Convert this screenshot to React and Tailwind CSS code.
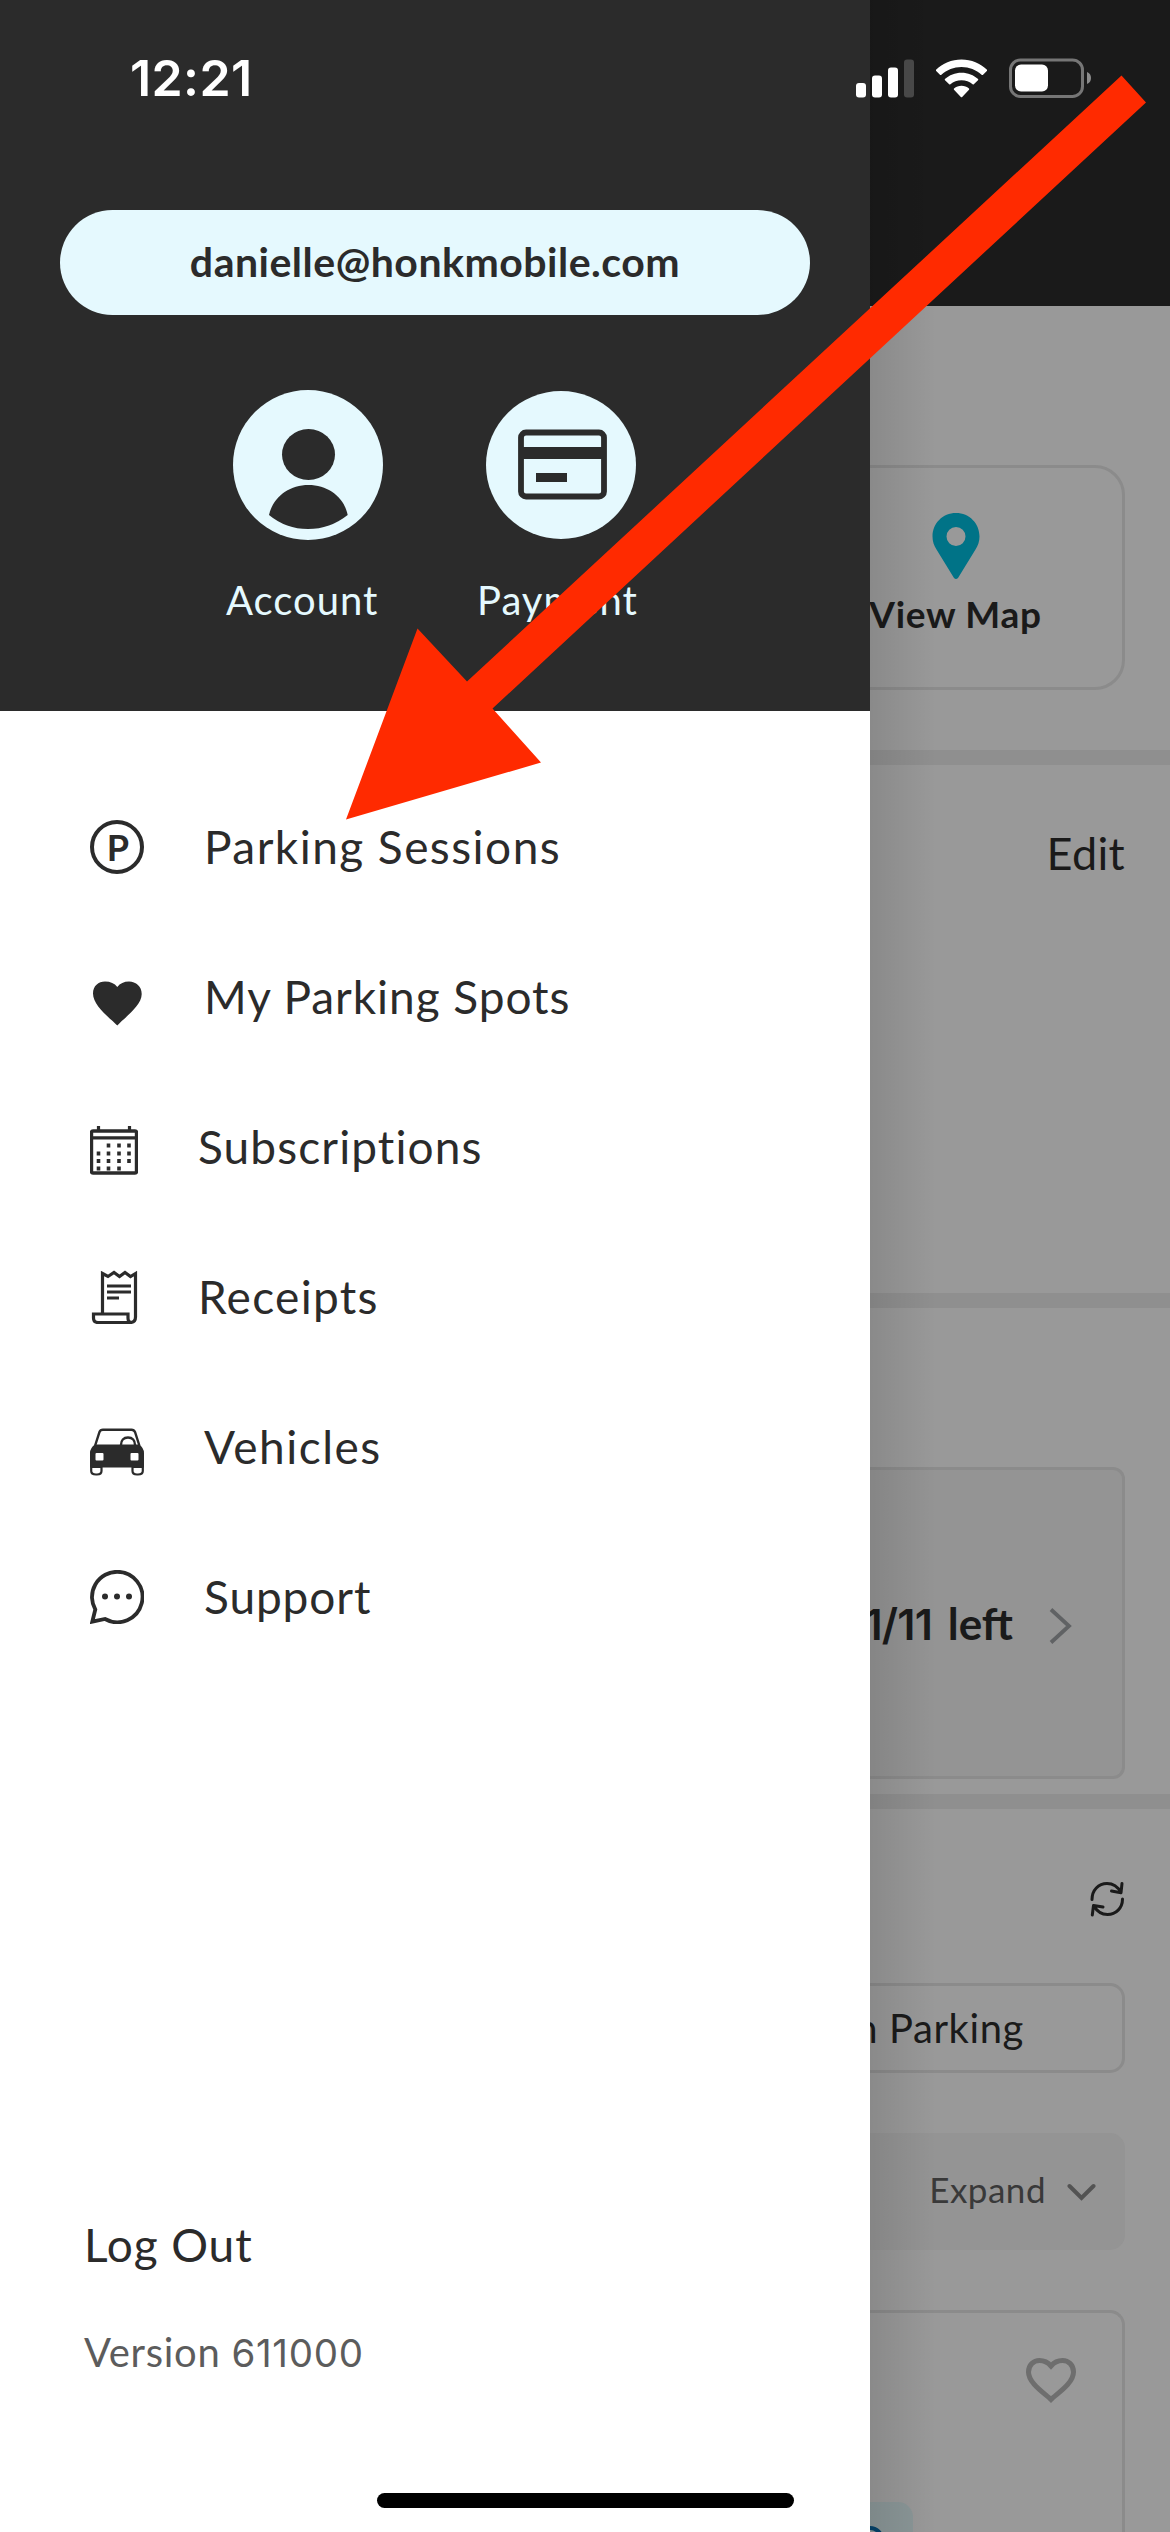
const INK = '#2b2b2b';

function SignalIcon() {
  return (
    <svg className="h-[41px] w-[58px]" viewBox="0 0 58 41" fill="#fff">
      <rect x="0" y="25" width="10" height="14.5" rx="3" />
      <rect x="16" y="17.5" width="10" height="22" rx="3" />
      <rect x="32" y="9.5" width="10" height="30" rx="3" />
      <rect x="48" y="1.5" width="10" height="38" rx="3" fill="#484848" />
    </svg>
  );
}

function WifiIcon() {
  return (
    <svg className="h-[41px] w-[51px]" viewBox="0 0 51 41" fill="#fff">
      <path d="M25.5 1.5C35.400 1.500 44.400 5.400 51 11.800Q51.300 12.400 50.800 13L46.800 16.900Q46.200 17.300 45.600 16.800C40.300 11.900 33.200 9 25.500 9S10.700 11.900 5.400 16.800Q4.800 17.300 4.200 16.900L.2 13Q-.3 12.400 0 11.800C6.600 5.400 15.600 1.500 25.500 1.500Z" />
      <path d="M25.500 14.700C31.900 14.700 37.700 17.100 42.100 21Q42.500 21.600 42 22.200L37.800 26.300Q37.200 26.700 36.600 26.200C33.600 23.700 29.700 22.300 25.500 22.300S17.400 23.700 14.400 26.200Q13.800 26.700 13.200 26.300L9 22.200Q8.500 21.600 8.900 21C13.300 17.100 19.100 14.700 25.500 14.700Z" />
      <path d="M25.500 27.800C28.300 27.800 30.900 28.800 33 30.500Q33.500 31.100 33 31.700L26.200 39Q25.500 39.700 24.800 39L18 31.700Q17.500 31.100 18 30.500C20.100 28.800 22.700 27.800 25.500 27.800Z" />
    </svg>
  );
}

function BatteryIcon() {
  return (
    <svg className="h-[41px] w-[83px]" viewBox="0 0 83 41">
      <rect x="1.500" y="1.900" width="72" height="36.500" rx="10" fill="none" stroke="#767676" strokeWidth="3" />
      <rect x="6" y="6.500" width="33" height="27" rx="6" fill="#fff" />
      <path d="M78 14Q82 15.500 82 20T78 26Z" fill="#8c8c8c" />
    </svg>
  );
}

function StatusBar() {
  return (
    <div className="absolute inset-x-0 top-0 z-10 flex h-[156px] items-center justify-between pr-[78px] pl-[130px] text-white">
      <span className="font-['Inter'] text-[50px] leading-none font-semibold tracking-[0.4px]">12:21</span>
      <div className="flex items-center gap-[22px]">
        <SignalIcon />
        <WifiIcon />
        <BatteryIcon />
      </div>
    </div>
  );
}

function AccountIcon() {
  return (
    <svg className="h-[150px] w-[150px]" viewBox="0 0 150 150">
      <circle cx="75" cy="75" r="75" fill="#e5f9fe" />
      <ellipse cx="75.500" cy="64.500" rx="26.500" ry="25.500" fill={INK} />
      <path d="M36 125C40 107 56 95 75.500 95S111 107 114.700 125Q97 139 75 139T36 125Z" fill={INK} />
    </svg>
  );
}

function PaymentIcon() {
  return (
    <svg className="h-[150px] w-[150px]" viewBox="0 0 150 150">
      <ellipse cx="75" cy="75" rx="75" ry="74" fill="#e5f9fe" />
      <rect x="35" y="42.500" width="83" height="64" rx="5" fill="none" stroke={INK} strokeWidth="5.800" />
      <rect x="35" y="57" width="83" height="12" fill={INK} />
      <rect x="50" y="83" width="31" height="9" fill={INK} />
    </svg>
  );
}

function ParkingIcon() {
  return (
    <span className="flex h-[54px] w-[54px] items-center justify-center rounded-full border-[4px] border-[#2b2b2b] pl-0.5 font-['Lato'] text-[36px] leading-none font-bold">
      P
    </span>
  );
}

function HeartIcon() {
  return (
    <svg className="h-[54px] w-[54px]" viewBox="0 0 54 54" fill={INK} overflow="visible">
      <path d="M27.300 55.500C20 48 3 36 3 23.500C3 16 8.500 11.600 15 11.600C20.500 11.600 24.500 13.500 27.300 17C30 13.500 34 11.600 39 11.600C46 11.600 51.700 16.500 51.700 24C51.700 36 34 48 27.300 55.500Z" />
    </svg>
  );
}

function CalendarIcon() {
  const dots = [
    [18.500, 19], [29, 19], [39, 19],
    [8.500, 27], [18.500, 27], [29, 27], [39, 27],
    [8.500, 34.500], [18.500, 34.500], [29, 34.500], [39, 34.500],
    [8.500, 42], [18.500, 42], [29, 42],
  ];
  return (
    <svg className="mt-[6px] h-[50px] w-[48px]" viewBox="0 0 48 50">
      <rect x="1.500" y="6" width="45" height="42" rx="1.500" fill="none" stroke={INK} strokeWidth="3.400" />
      <path d="M1 12.800H47M8.500 1V6M39.500 1V6" stroke={INK} strokeWidth="3.200" />
      {dots.map(([x, y]) => (
        <rect key={`${x}-${y}`} x={x - 1.8} y={y - 0.5} width="3.600" height="4" fill={INK} />
      ))}
    </svg>
  );
}

function ReceiptIcon() {
  return (
    <svg className="h-[54px] w-[48px]" viewBox="0 0 48 54" fill="none" stroke={INK} strokeWidth="3.200">
      <path d="M12.500 44V3.500L18 6.500L24 2.500L29.500 6.500L35 2.500L40.500 6.500L45.500 3.500V47Q45.500 52.500 40 52.500H8Q3.500 52.500 3.500 48V44H38V48Q38 52.500 41.500 52.500" />
      <path d="M17 16H41M17 22H41M17 28H29" />
    </svg>
  );
}

function CarIcon() {
  return (
    <svg className="mt-[4px] h-[54px] w-[54px]" viewBox="0 0 54 54">
      <path d="M5 24L9.500 10Q10.300 7.700 13 7.700H41.500Q44 7.700 45 10L49.500 24" fill="none" stroke={INK} strokeWidth="2.400" />
      <path d="M31 23C31 18.500 33.500 15.500 38 15.500S45 18.500 45 23" fill="none" stroke={INK} strokeWidth="2.400" />
      <path d="M5 22.500H49Q54 26 54 31V45H0V31Q0 26 5 22.500ZM6.500 31Q5.500 31 5.500 32V37.500Q5.500 38.500 6.500 38.500H12.500Q13.500 38.500 13.500 37.500V32Q13.500 31 12.500 31ZM41.500 31Q40.500 31 40.500 32V37.500Q40.500 38.500 41.500 38.500H47.500Q48.500 38.500 48.500 37.500V32Q48.500 31 47.500 31Z" fill={INK} fillRule="evenodd" />
      <path d="M1.200 45V49Q1.200 52.500 6 52.500H7Q11.500 52.500 11.500 49V45ZM42.500 45V49Q42.500 52.500 47 52.500H48Q52.800 52.500 52.800 49V45Z" fill="#fff" stroke={INK} strokeWidth="2.200" />
      <rect x="0" y="42" width="54" height="3.500" fill={INK} />
    </svg>
  );
}

function ChatIcon() {
  return (
    <svg className="h-[54px] w-[54px]" viewBox="0 0 54 54">
      <path d="M27 1.800A25.200 25.200 0 1 1 15 49L2.300 51.700L5.300 39.500A25.200 25.200 0 0 1 27 1.800Z" fill="none" stroke={INK} strokeWidth="3.800" />
      <circle cx="15" cy="26.500" r="3" fill={INK} />
      <circle cx="27" cy="26.500" r="3" fill={INK} />
      <circle cx="39" cy="26.500" r="3" fill={INK} />
    </svg>
  );
}

const MENU = [
  { label: 'Parking Sessions', icon: ParkingIcon, spacing: 'tracking-[1.45px]' },
  { label: 'My Parking Spots', icon: HeartIcon, spacing: 'tracking-[0.95px]' },
  { label: 'Subscriptions', icon: CalendarIcon, spacing: 'tracking-[1.1px]' },
  { label: 'Receipts', icon: ReceiptIcon, spacing: 'tracking-[1.3px]' },
  { label: 'Vehicles', icon: CarIcon, spacing: 'tracking-[1.5px]' },
  { label: 'Support', icon: ChatIcon, spacing: 'tracking-[0.9px]' },
];

function Drawer() {
  return (
    <aside className="flex h-full w-[870px] shrink-0 flex-col bg-white text-[#2b2b2b]">
      <header className="flex h-[711px] flex-col items-center bg-[#2b2b2b] pt-[210px]">
        <div className="flex h-[105px] w-[750px] items-center justify-center rounded-full bg-[#e5f9fe] text-[41px] leading-none font-bold">
          <span className="mb-[2px] tracking-[0.5px]">danielle@honkmobile.com</span>
        </div>
        <div className="mt-[75px] flex w-full pl-[226px] text-[40px] leading-[48px] text-[#e5f9fe]">
          <div className="flex w-[253px] flex-col pl-[7px]">
            <AccountIcon />
            <span className="mt-[36px] -ml-[7px] tracking-[1px]">Account</span>
          </div>
          <div className="flex flex-col pl-[7px]">
            <PaymentIcon />
            <span className="mt-[36px] -ml-[9px] tracking-[1px]">Payment</span>
          </div>
        </div>
      </header>
      <nav className="flex flex-col pt-[61px] pl-[90px]">
        {MENU.map(({ label, icon: Icon, spacing }) => (
          <div key={label} className="flex h-[150px] items-center gap-[60px] text-[46px] leading-none">
            <Icon />
            <span className={spacing}>{label}</span>
          </div>
        ))}
      </nav>
      <footer className="mt-auto flex h-[314px] flex-col pl-[84px]">
        <span className="text-[46px] leading-[54px] tracking-[0.9px]">Log Out</span>
        <span className="mt-[56px] text-[40px] leading-[48px] tracking-[0.7px] text-[#5c5c5c]">
          Version <span className="font-['Inter'] text-[38.5px]">611000</span>
        </span>
      </footer>
    </aside>
  );
}

function RefreshIcon() {
  return (
    <svg className="h-[36px] w-[34px]" viewBox="0 0 34 36" fill="none" stroke="#1a1a1a" strokeWidth="3" strokeLinecap="round" strokeLinejoin="round">
      <path d="M2 18.500C2 9 8.500 2.500 17 2.500C23 2.500 28 6 31 11.500M21.500 10L31 11.800L32 2.500" />
      <path d="M32.500 18C32.500 27 26 33.500 17.500 33.500C11.500 33.500 7 30.500 3.500 24.500M13 26L3.500 24.500L2.300 34" />
    </svg>
  );
}

function Content() {
  return (
    <main className="flex h-full w-[300px] flex-col overflow-hidden bg-[#999] text-[#1a1a1a]">
      <div className="h-[306px] shrink-0 bg-[#1a1a1a]" />

      <section className="flex h-[444px] shrink-0 pt-[159px]">
        <div className="-ml-[84px] flex h-[225px] w-[339px] shrink-0 flex-col items-center rounded-[30px] border-[3px] border-[#8b8b8b] pt-[45px]">
          <svg className="h-[66px] w-[48px]" viewBox="0 0 48 66">
            <path d="M24 0C37.500 0 47.500 10.500 47.500 23.500C47.500 28.500 46 32.500 43.500 36.500L26 65Q24 67 22 65L4.500 36.500C2 32.500.5 28.500.5 23.500C.5 10.500 10.500 0 24 0ZM24 14A9.500 9.500 0 1 0 24 33A9.500 9.500 0 1 0 24 14Z" fill="#007387" fillRule="evenodd" />
          </svg>
          <span className="mt-[11px] text-[37px] leading-[48px] font-bold tracking-[0.7px] whitespace-nowrap">View Map</span>
        </div>
      </section>
      <div className="h-[15px] shrink-0 bg-[#8f8f8f]" />

      <section className="flex h-[528px] shrink-0 justify-end pt-[61px] pr-[45px]">
        <span className="text-[45px] leading-[54px] tracking-[0.3px]">Edit</span>
      </section>
      <div className="h-[15px] shrink-0 bg-[#8f8f8f]" />

      <section className="h-[486px] shrink-0 pt-[159px]">
        <div className="flex h-[312px] w-[255px] items-center justify-end rounded-r-[12px] border-[3px] border-l-0 border-[#8b8b8b] bg-[#949494] pr-[50px]">
          <span className="text-[44px] leading-none font-bold whitespace-nowrap">
            <span className="mr-[5px] font-['Inter'] text-[43px] font-semibold tracking-[-0.8px]">1/11</span> left
          </span>
          <svg className="mt-[6px] ml-[36px] h-[38px] w-[23px] shrink-0" viewBox="0 0 23 38" fill="none" stroke="#606264" strokeWidth="3.800">
            <path d="M2 2.500L20 19L2 35.500" />
          </svg>
        </div>
      </section>
      <div className="h-[15px] shrink-0 bg-[#8f8f8f]" />

      <section className="flex shrink-0 flex-col pt-[72px]">
        <div className="flex justify-end pr-[46px]">
          <RefreshIcon />
        </div>
        <div className="mt-[66px] flex h-[90px] w-[255px] items-center justify-end rounded-r-[15px] border-[3px] border-l-0 border-[#8b8b8b] pr-[98px]">
          <span className="text-[40px] leading-none tracking-[0.6px] whitespace-nowrap">Open Parking</span>
        </div>
        <div className="mt-[60px] flex h-[117px] w-[255px] items-center justify-end rounded-r-[15px] bg-[#949494] pr-[29px]">
          <span className="mb-[4px] text-[35px] leading-none tracking-[0.5px] text-[#393939]">Expand</span>
          <svg className="ml-[21px] h-[18px] w-[29px]" viewBox="0 0 29 18" fill="none" stroke="#535353" strokeWidth="4" strokeLinecap="round">
            <path d="M2.500 3L14.500 15L26.500 3" />
          </svg>
        </div>
        <div className="mt-[60px] flex h-[300px] w-[255px] flex-col rounded-tr-[15px] border-t-[3px] border-r-[3px] border-[#8b8b8b] pt-[45px]">
          <svg className="ml-[156px] h-[45px] w-[50px]" viewBox="0 0 50 45" fill="none" stroke="#6e6e6e" strokeWidth="5">
            <path d="M25 41.500C19 35.500 2.500 25.500 2.500 14C2.500 7 7.500 2.500 13.500 2.500C18.500 2.500 22 4.500 25 8C28 4.500 31.500 2.500 36.500 2.500C42.500 2.500 47.500 7 47.500 14C47.500 25.500 31 35.500 25 41.500Z" />
          </svg>
          <div className="mt-[99px] h-[60px] w-[43px] overflow-hidden rounded-tr-[15px] bg-[#8b9798] pt-[24px]">
            <svg className="h-[26px] w-[14px]" viewBox="0 0 14 26" fill="none" stroke="#04436b" strokeWidth="4">
              <circle cx="0" cy="14" r="12" />
            </svg>
          </div>
        </div>
      </section>
    </main>
  );
}

export default function App() {
  return (
    <div className="relative flex h-[2532px] w-[1170px] overflow-hidden bg-white font-['Lato',sans-serif]">
      <Drawer />
      <Content />
      <div className="absolute top-0 left-[870px] h-full w-[66px] bg-linear-to-r from-black/10 to-transparent" />
      <StatusBar />
      <div className="absolute top-[2493px] left-[377px] h-[15px] w-[417px] rounded-full bg-black" />
      <svg className="absolute inset-0 z-20 h-full w-full" viewBox="0 0 1170 2532">
        <polygon points="346,819.500 417.500,628.500 467,681.500 1121.500,75.500 1146,102.500 492.500,708.500 541,762.500" fill="#ff2a00" />
      </svg>
    </div>
  );
}
